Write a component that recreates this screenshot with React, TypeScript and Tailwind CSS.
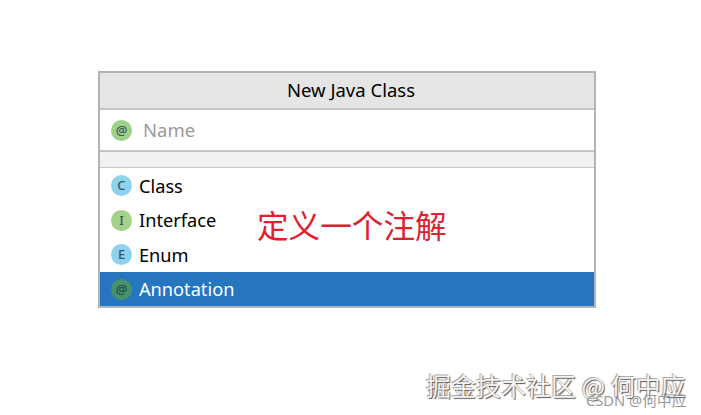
const font = { fontFamily: '"Noto Sans", "Open Sans", sans-serif' };

function Badge({ letter, color, dark = false }: { letter: string; color: string; dark?: boolean }) {
  return (
    <span className={`flex h-[21px] w-[21px] shrink-0 items-center justify-center rounded-full text-[13px] font-medium leading-none ${color} ${dark ? "text-[#1f4f4a]" : "text-[#3d5560]"}`}>
      {letter}
    </span>
  );
}

function Row({ letter, color, label, selected = false, h }: { letter: string; color: string; label: string; selected?: boolean; h: string }) {
  return (
    <div className={`flex items-center pl-[11px] ${h} ${selected ? "bg-[#2675bf] text-white" : "text-black"}`}>
      <Badge letter={letter} color={color} dark={selected} />
      <span className="ml-[7px] pt-[1px] text-[18.2px] leading-none">{label}</span>
    </div>
  );
}

export default function App() {
  return (
    <div className="relative h-[415px] w-[701px] overflow-hidden bg-white pl-[98px] pt-[71px]" style={font}>
      <div className="h-[237px] w-[498px] border-2 border-[#b4b4b4]">
        <div className="flex h-[37px] items-center justify-center border-b-2 border-[#c4c4c4] bg-[#e5e5e5] pb-[1px] pl-[8px] text-[18.5px] text-black">
          New Java Class
        </div>
        <div className="flex h-[42px] items-center border-b-2 border-[#c4c4c4] pl-[11px]">
          <Badge letter="@" color="bg-[#9fd088]" />
          <span className="ml-[11px] text-[18.5px] leading-none text-[#9a9a9a]">Name</span>
        </div>
        <div className="h-[16px] border-b border-[#c8c8c8] bg-[#f1f1f1]" />
        <div className="flex flex-col">
          <Row letter="C" color="bg-[#8dd3ee]" label="Class" h="h-[35px]" />
          <Row letter="I" color="bg-[#a3d28a]" label="Interface" h="h-[34px]" />
          <Row letter="E" color="bg-[#8dd3ee]" label="Enum" h="h-[35px]" />
          <Row letter="@" color="bg-[#46906f]" label="Annotation" selected h="h-[34px]" />
        </div>
      </div>

      <div
        className="absolute left-[257px] top-[205px] whitespace-nowrap text-[31.6px] leading-[38px] text-[#e0202c]"
        style={{ fontFamily: '"Noto Sans CJK SC", sans-serif' }}
      >
        定义一个注解
      </div>

      <div
        className="absolute left-[426px] top-[368px] whitespace-nowrap text-[25px] leading-[34px] text-[#f4f4f4] [text-shadow:1px_1px_1px_#555,-1px_-1px_0_#aaa]"
        style={{ fontFamily: '"Noto Sans CJK SC", sans-serif' }}
      >
        掘金技术社区 @ 何中应
      </div>

      <div
        className="absolute left-[586px] top-[391px] whitespace-nowrap text-[14.7px] leading-[18px] text-[#9a9a9a]"
        style={{ fontFamily: '"Noto Sans", "Noto Sans CJK SC", sans-serif' }}
      >
        CSDN @何中应
      </div>
    </div>
  );
}
